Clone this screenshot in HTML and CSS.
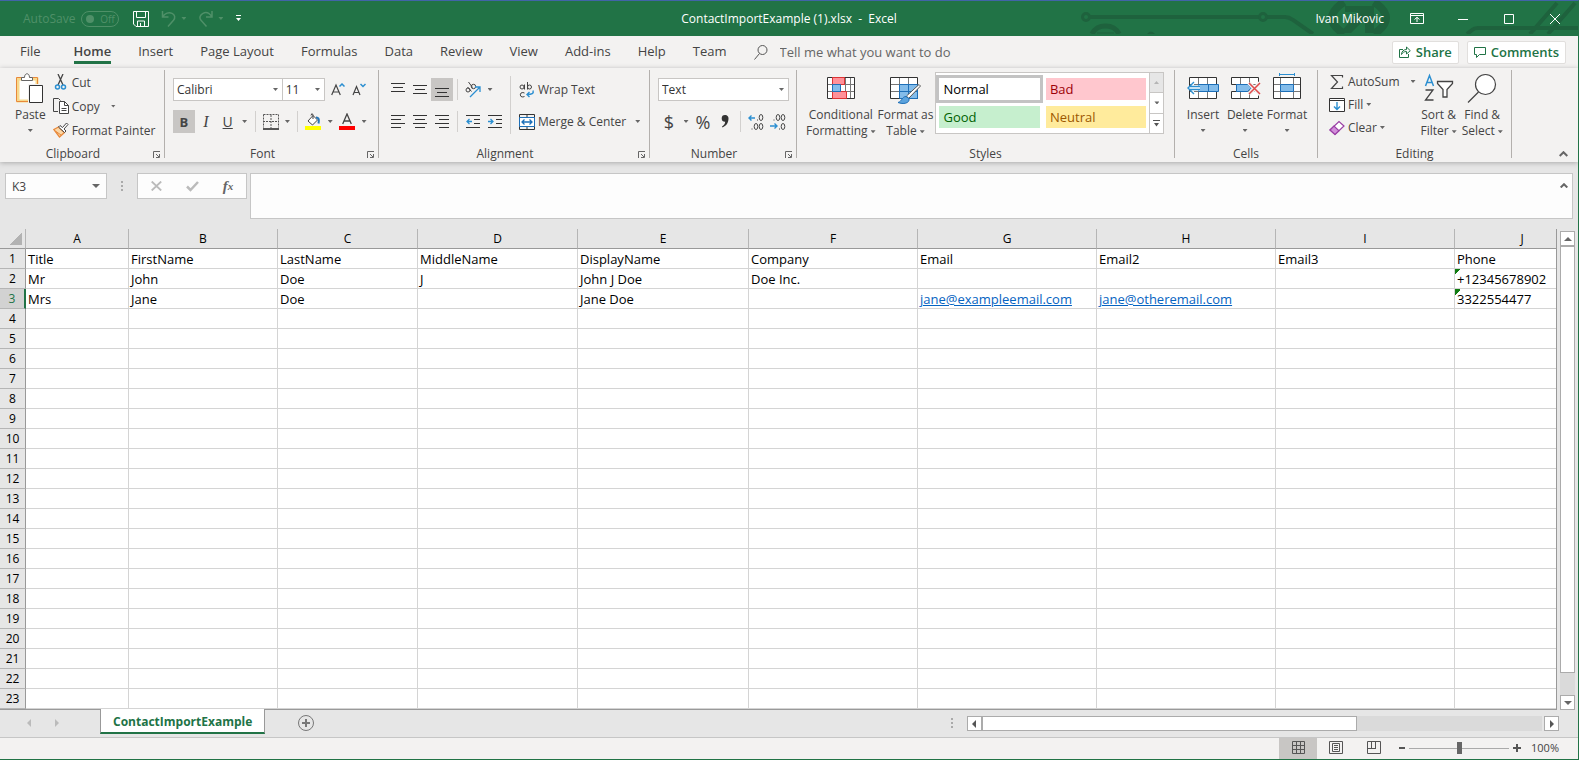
FILE: index.html
```html
<!DOCTYPE html>
<html lang="en">
<head>
    <meta charset="UTF-8">
    <meta name="viewport" content="width=device-width, initial-scale=1.0">
    <title>ContactImportExample (1).xlsx - Excel</title>
    <link rel="stylesheet" href="styles.css">
</head>
<body>
    <header class="titlebar">
        <svg class="circuit" width="500" height="33" viewBox="0 0 500 33" fill="none" stroke="#1e623d" stroke-width="4">
            <circle cx="8" cy="16" r="3.5" stroke-width="3"/>
            <path d="M12 16h169M189 16h18q4 0 8 3l20 14"/>
            <circle cx="185" cy="16" r="3.5" stroke-width="3"/>
            <path d="M14 33a15 14 0 0 1 27 0" stroke-width="5"/>
            <path d="M19 32h17" stroke-width="1"/>
            <path d="M69 33q4-5 8 0z" fill="#1e623d" stroke="none"/>
            <path d="M266 1q-24 16 0 32M296 1q24 16 0 32" stroke-width="8"/>
            <path d="M267 5h29v27h-9V18l-14 14h-11l18-21h-13z" fill="#1e623d" stroke="none"/>
            <path d="M389 33l5-4q2-2 6-2h100M452 33l27-31M470 33l27-31"/>
        </svg>
        <div class="quick">
            <label class="autosave">AutoSave
                <button class="toggle" type="button"><span class="knob"></span>Off</button>
            </label>
            <button class="qbtn save" type="button" aria-label="Save">
                <svg width="16" height="16" viewBox="0 0 16 16" fill="none" stroke="#fff"><path d="M.5.5h15v15H3L.5 13zM3.5 1v5.5h9V1M4.5 15v-5h7v5M7.5 12v3"/></svg>
            </button>
            <button class="qbtn" type="button" aria-label="Undo">
                <svg width="16" height="16" viewBox="0 0 16 16" fill="none" stroke="#4f9068" stroke-width="1.5"><path d="M1.5 0v6h6M1.5 6C4 2 8 .8 11 2.3s3.5 4.5 1.5 7L7 15.5"/></svg>
                <span class="caret"></span>
            </button>
            <button class="qbtn" type="button" aria-label="Redo">
                <svg width="16" height="16" viewBox="0 0 16 16" fill="none" stroke="#4f9068" stroke-width="1.5"><path d="M14 0v6H8M14 6C11.5 2 8 .8 5 2.3S1 7 3 9.3l5.5 6.2"/></svg>
                <span class="caret"></span>
            </button>
            <button class="qbtn" type="button" aria-label="Customize">
                <svg width="7" height="7" viewBox="0 0 7 7" fill="#fff"><path d="M1 0h5v1H1zM1 3h5L3.5 6z"/></svg>
            </button>
        </div>
        <h1 class="doc-title">ContactImportExample (1).xlsx&nbsp; -&nbsp; Excel</h1>
        <div class="window-controls">
            <span class="user">Ivan Mikovic</span>
            <button type="button" aria-label="Ribbon display"><svg width="14" height="11" viewBox="0 0 14 11" fill="none" stroke="#fff"><path d="M.5.5h13v10H.5zM0 2.5h14M7 9V4.500M4.500 6.500L7 4.300l2.500 2.200"/></svg></button>
            <button type="button" aria-label="Minimize"><svg width="10" height="10" viewBox="0 0 10 10" stroke="#fff"><path d="M0 5.500h10"/></svg></button>
            <button type="button" aria-label="Maximize"><svg width="10" height="10" viewBox="0 0 10 10" fill="none" stroke="#fff"><path d="M.5.5h9v9H.5z"/></svg></button>
            <button type="button" aria-label="Close"><svg width="10" height="10" viewBox="0 0 10 10" stroke="#fff"><path d="M0 0l10 10M10 0L0 10"/></svg></button>
        </div>
    </header>

    <nav class="tabs">
        <a href="#" class="file">File</a>
        <a href="#" class="active">Home</a>
        <a href="#">Insert</a>
        <a href="#">Page Layout</a>
        <a href="#">Formulas</a>
        <a href="#">Data</a>
        <a href="#">Review</a>
        <a href="#">View</a>
        <a href="#">Add-ins</a>
        <a href="#">Help</a>
        <a href="#">Team</a>
        <label class="tell-me">
            <svg width="14" height="15" viewBox="0 0 14 15" fill="none" stroke="#555"><circle cx="8.500" cy="5" r="4.500"/><path d="M5.500 8.500l-5 6"/></svg>
            <input type="text" value="Tell me what you want to do">
        </label>
        <div class="tab-actions">
            <button type="button"><svg width="12" height="12" viewBox="0 0 12 12" fill="none" stroke="#217346"><path d="M4 3.500H.5v8h9V8M2.500 8.500c0-3 2-5 5-5V1l3.800 3.700L7.500 8V5.500c-2.500 0-4 1-5 3z"/></svg>Share</button>
            <button type="button"><svg width="12" height="11" viewBox="0 0 12 11" fill="none" stroke="#217346"><path d="M.5.5h11v7h-6l-3 3v-3h-2z"/></svg>Comments</button>
        </div>
    </nav>

    <section class="ribbon">
        <div class="group clipboard">
            <div class="tools">
                <button class="big" type="button">
                    <svg width="28" height="32" viewBox="0 0 28 32" fill="none"><path d="M2 6h19v22H2z" fill="#fff" stroke="#f7d98c" stroke-width="3"/><path d="M.5 4.500h21v24H.5z" stroke="#e8883a"/><path d="M5.500 7.500v-3h3c0-5 5-5 5 0h3v3z" fill="#fff" stroke="#666"/><path d="M12 11h16v20H12z" fill="#f3f2f1"/><path d="M13.500 12.500h13v17h-13z" fill="#fff" stroke="#333"/></svg>
                    <span>Paste</span>
                    <span class="caret"></span>
                </button>
                <div class="stack">
                    <button type="button"><svg width="16" height="16" viewBox="0 0 16 16" fill="none"><path d="M5 0l5 11M10 0L5 11" stroke="#444" stroke-width="1.300"/><circle cx="4.500" cy="13" r="2" stroke="#2b8fd1" stroke-width="1.500"/><circle cx="10.500" cy="13" r="2" stroke="#2b8fd1" stroke-width="1.500"/></svg>Cut</button>
                    <button type="button"><svg width="16" height="16" viewBox="0 0 16 16" fill="none" stroke="#444"><path d="M5 13.500H.5V.5h5l2 2"/><path d="M6.500 3.500h5l4 4v8h-9z" fill="#fff"/><path d="M11.500 3.500v4h4M8.500 10.500h5M8.500 12.500h5"/></svg>Copy<span class="caret"></span></button>
                    <button type="button"><svg width="16" height="16" viewBox="0 0 16 16" fill="none"><path d="M.8 7.500L5.500 5l6 5.500-5 4.500z" fill="#fbd7a6" stroke="#e8883a" stroke-width="1.300"/><path d="M3 9.500l5 3.500" stroke="#e8883a"/><path d="M5.500 5L7 3.500l2.500 2L13.500 1 15 2.500 11 7l2 2-1.500 1.500z" fill="#fff" stroke="#444"/></svg>Format Painter</button>
                </div>
            </div>
            <div class="group-name">Clipboard<svg class="launch" width="8" height="8" viewBox="0 0 8 8"><path d="M.5 7V.5H7M3 3l3 3M6.500 3v3.500H3" fill="none" stroke="#666"/></svg></div>
        </div>

        <div class="group font">
            <div class="tools rows">
                <div class="row">
                    <select class="combo face" aria-label="Font"><option>Calibri</option></select>
                    <select class="combo size" aria-label="Font size"><option>11</option></select>
                    <button class="ic grow" type="button" aria-label="Increase font size"><svg width="14" height="14" viewBox="0 0 14 14" fill="none"><path d="M.7 12L5 2l4.300 10M2 9h6" stroke="#444" stroke-width="1.200"/><path d="M8.500 3.500L11 1l2.500 2.500" stroke="#2b8fd1" stroke-width="1.500"/></svg></button>
                    <button class="ic" type="button" aria-label="Decrease font size"><svg width="14" height="14" viewBox="0 0 14 14" fill="none"><path d="M1 12l3.500-8.500L8 12M2 9.500h5" stroke="#444" stroke-width="1.200"/><path d="M8.500 1L11 3.500 13.500 1" stroke="#2b8fd1" stroke-width="1.500"/></svg></button>
                </div>
                <div class="row">
                    <button class="ic on" type="button"><b>B</b></button>
                    <button class="ic serif" type="button"><i>I</i></button>
                    <button class="ic" type="button"><u>U</u></button>
                    <button class="drop" type="button" aria-label="Underline options"><span class="caret"></span></button>
                    <span class="sep"></span>
                    <button class="ic" type="button" aria-label="Borders"><svg width="16" height="16" viewBox="0 0 16 16" fill="none" stroke="#555"><path d="M.5.5h15v13M.5.5v13M8 1v13M0 7.500h16" stroke-dasharray="2 1"/><path d="M0 15h16" stroke="#222" stroke-width="1.500"/></svg></button>
                    <button class="drop" type="button" aria-label="Border options"><span class="caret"></span></button>
                    <span class="sep"></span>
                    <button class="ic" type="button" aria-label="Fill color"><svg width="16" height="17" viewBox="0 0 16 17" fill="none"><path d="M8 2.500l4.500 4.500L7.500 12 3 8zM8 6V1.500q-1.500-2-2 1" fill="#fff" stroke="#444"/><path d="M11 4.500c3.500 0 3 3 2.500 6" stroke="#2576b8" stroke-width="2"/><path d="M0 13h16v4H0z" fill="#ff0"/></svg></button>
                    <button class="drop" type="button" aria-label="Fill options"><span class="caret"></span></button>
                    <button class="ic" type="button" aria-label="Font color"><svg width="16" height="17" viewBox="0 0 16 17" fill="none"><path d="M3.700 11L8 1l4.300 10M5 8h6" stroke="#444" stroke-width="1.300"/><path d="M0 13h16v4H0z" fill="#f00"/></svg></button>
                    <button class="drop" type="button" aria-label="Font color options"><span class="caret"></span></button>
                </div>
            </div>
            <div class="group-name">Font<svg class="launch" width="8" height="8" viewBox="0 0 8 8"><path d="M.5 7V.5H7M3 3l3 3M6.500 3v3.500H3" fill="none" stroke="#666"/></svg></div>
        </div>

        <div class="group alignment">
            <div class="tools">
                <div class="rows">
                    <div class="row">
                        <button class="ic" type="button" aria-label="Top align"><svg width="14" height="14" viewBox="0 0 14 14" stroke="#333"><path d="M0 .5h14M2 4.500h10M0 8.500h14"/></svg></button>
                        <button class="ic" type="button" aria-label="Middle align"><svg width="14" height="14" viewBox="0 0 14 14" stroke="#333"><path d="M0 2.500h14M2 6.500h10M0 10.500h14"/></svg></button>
                        <button class="ic on" type="button" aria-label="Bottom align"><svg width="14" height="14" viewBox="0 0 14 14" stroke="#333"><path d="M0 5.500h14M2 9.500h10M0 13.500h14"/></svg></button>
                        <span class="sep"></span>
                        <button class="ic" type="button" aria-label="Orientation"><svg width="18" height="16" viewBox="0 0 18 16" fill="none"><g stroke="#444"><circle cx="4" cy="8" r="2"/><path d="M3.500 5l4 4.500"/><circle cx="9.500" cy="4.500" r="2.200"/><path d="M4.500 0l4 5.500"/></g><path d="M6 15l9.500-9.500M11 5h5v5" stroke="#2b8fd1" stroke-width="1.300"/></svg></button>
                        <button class="drop" type="button" aria-label="Orientation options"><span class="caret"></span></button>
                    </div>
                    <div class="row">
                        <button class="ic" type="button" aria-label="Align left"><svg width="14" height="14" viewBox="0 0 14 14" stroke="#333"><path d="M0 .5h14M0 4.500h10M0 8.500h14M0 12.500h10"/></svg></button>
                        <button class="ic" type="button" aria-label="Center"><svg width="14" height="14" viewBox="0 0 14 14" stroke="#333"><path d="M0 .5h14M2 4.500h10M0 8.500h14M2 12.500h10"/></svg></button>
                        <button class="ic" type="button" aria-label="Align right"><svg width="14" height="14" viewBox="0 0 14 14" stroke="#333"><path d="M0 .5h14M4 4.500h10M0 8.500h14M4 12.500h10"/></svg></button>
                        <span class="sep"></span>
                        <button class="ic" type="button" aria-label="Decrease indent"><svg width="14" height="14" viewBox="0 0 14 14" fill="none" stroke="#333"><path d="M0 .5h14M8 4.500h6M8 8.500h6M0 12.500h14"/><path d="M6 6.500H1M3.500 4L1 6.500 3.500 9" stroke="#2b8fd1" stroke-width="1.300"/></svg></button>
                        <button class="ic" type="button" aria-label="Increase indent"><svg width="14" height="14" viewBox="0 0 14 14" fill="none" stroke="#333"><path d="M0 .5h14M8 4.500h6M8 8.500h6M0 12.500h14"/><path d="M0 6.500h5M2.500 4L5 6.500 2.500 9" stroke="#2b8fd1" stroke-width="1.300"/></svg></button>
                    </div>
                </div>
                <span class="sep tall"></span>
                <div class="rows">
                    <button class="row label" type="button"><svg width="16" height="16" viewBox="0 0 16 16" fill="none"><g stroke="#444"><circle cx="3" cy="5" r="2"/><path d="M5.500 2.500v5M8.500 0v7.500M5.500 11q-1.500-1-3.500 0-1.500 2 0 3.500 2 1 3.500 0"/><circle cx="10.500" cy="5" r="2"/></g><path d="M14 8.500c1 3-1 4-6 4M10.500 10L8 12.500l2.500 2.500" stroke="#2b8fd1" stroke-width="1.400"/></svg>Wrap Text</button>
                    <button class="row label" type="button"><svg width="16" height="16" viewBox="0 0 16 16" fill="none"><path d="M.5.5h15v15H.5zM0 3.500h16M0 12.500h16M8 0v4M8 12v4" stroke="#333"/><path d="M.5 3.500h15v9H.5z" fill="#fff" stroke="#1d6fb8"/><path d="M3 8h10M5.500 5.500L3 8l2.500 2.500M10.500 5.500L13 8l-2.500 2.500" stroke="#1d6fb8" stroke-width="1.300"/></svg>Merge &amp; Center<span class="caret"></span></button>
                </div>
            </div>
            <div class="group-name">Alignment<svg class="launch" width="8" height="8" viewBox="0 0 8 8"><path d="M.5 7V.5H7M3 3l3 3M6.500 3v3.500H3" fill="none" stroke="#666"/></svg></div>
        </div>

        <div class="group number">
            <div class="tools rows">
                <div class="row"><select class="combo format" aria-label="Number format"><option>Text</option></select></div>
                <div class="row">
                    <button class="ic glyph" type="button">$</button>
                    <button class="drop" type="button" aria-label="Currency options"><span class="caret"></span></button>
                    <button class="ic glyph" type="button">%</button>
                    <button class="ic" type="button" aria-label="Comma style"><svg width="8" height="13" viewBox="0 0 8 13" fill="#333"><path d="M4 0a3.300 3.300 0 0 1 3.500 3.500C7.500 8 5 11 1.500 12.500l-.5-1c2-1.200 3-2.700 3.200-4.700A3.300 3.300 0 1 1 4 0z"/></svg></button>
                    <span class="sep"></span>
                    <button class="ic" type="button" aria-label="Increase decimal"><svg width="16" height="16" viewBox="0 0 16 16" fill="none" stroke="#444"><path d="M7 4H1M3.500 1.500L1 4l2.500 2.500" stroke="#2b8fd1" stroke-width="1.400"/><ellipse cx="13" cy="3.500" rx="1.800" ry="3"/><ellipse cx="8" cy="12.500" rx="1.800" ry="3"/><ellipse cx="13" cy="12.500" rx="1.800" ry="3"/><path d="M9 6h1M3.500 15h1"/></svg></button>
                    <button class="ic" type="button" aria-label="Decrease decimal"><svg width="16" height="16" viewBox="0 0 16 16" fill="none" stroke="#444"><path d="M0 12h7M4.500 9.500L7 12l-2.500 2.500" stroke="#2b8fd1" stroke-width="1.400"/><ellipse cx="8" cy="3.500" rx="1.800" ry="3"/><ellipse cx="13" cy="3.500" rx="1.800" ry="3"/><ellipse cx="13" cy="12.500" rx="1.800" ry="3"/><path d="M3.500 6h1M9 15h1"/></svg></button>
                </div>
            </div>
            <div class="group-name">Number<svg class="launch" width="8" height="8" viewBox="0 0 8 8"><path d="M.5 7V.5H7M3 3l3 3M6.500 3v3.500H3" fill="none" stroke="#666"/></svg></div>
        </div>

        <div class="group styles">
            <div class="tools">
                <button class="big" type="button">
                    <svg width="28" height="32" viewBox="0 0 28 32" fill="none"><path d="M.5 4.500h27v21H.5z" fill="#fff"/><path d="M5.500 5v20M18.500 5v20M23.500 5v20M0 11.500h28M0 18.500h28" stroke="#777"/><path d="M.5 4.500h27v21H.5z" stroke="#333"/><path d="M5.500 4.500h12v7h-12zM5.500 18.500h14v7h-14z" fill="#ff9199" stroke="#d33"/><path d="M5.500 11.500h8v7h-8z" fill="#83bcea" stroke="#1d6fb8"/></svg>
                    <span>Conditional<br>Formatting<span class="caret"></span></span>
                </button>
                <button class="big" type="button">
                    <svg width="32" height="32" viewBox="0 0 32 32" fill="none"><path d="M.5 4.500h27v21H.5z" fill="#fff"/><path d="M9.500 11.500h18v14h-18z" fill="#83bcea"/><path d="M9.500 5v20M18.500 5v20M0 11.500h28M0 18.500h28" stroke="#777"/><path d="M.5 4.500h27v21H.5z" stroke="#333"/><path d="M9.500 11.500h18v14h-18zM18.500 12v13M10 18.500h17" stroke="#1d6fb8"/><path d="M29 11.500L16.500 23l2 2.500L30.500 13z" fill="#fff" stroke="#555"/><path d="M16 23.500c-4 0-4 5-8 6 5 2 12 1 11-4z" fill="#5ba3dd" stroke="#1d6fb8"/></svg>
                    <span>Format as<br>Table<span class="caret"></span></span>
                </button>
                <div class="gallery">
                    <div class="swatches">
                        <button class="normal" type="button">Normal</button>
                        <button class="bad" type="button">Bad</button>
                        <button class="good" type="button">Good</button>
                        <button class="neutral" type="button">Neutral</button>
                    </div>
                    <div class="gallery-nav">
                        <button class="off" type="button" aria-label="Row up"><svg width="5" height="3" viewBox="0 0 5 3" fill="#b5b5b5"><path d="M0 3h5L2.500 0z"/></svg></button>
                        <button type="button" aria-label="Row down"><span class="caret"></span></button>
                        <button type="button" aria-label="More styles"><svg width="7" height="7" viewBox="0 0 7 7" fill="#555"><path d="M0 0h7v1H0zM1 3h5L3.500 6.500z"/></svg></button>
                    </div>
                </div>
            </div>
            <div class="group-name">Styles</div>
        </div>

        <div class="group cells">
            <div class="tools">
                <button class="big" type="button">
                    <svg width="32" height="32" viewBox="0 0 32 32" fill="none"><path d="M2.500 4.500h27v21h-27z" fill="#fff"/><path d="M11.500 5v20M20.500 5v20M3 11.500h27M3 18.500h27" stroke="#777"/><path d="M2.500 4.500h27v21h-27z" stroke="#333"/><path d="M11.500 11.500h20v7h-20zM21.500 12v6" fill="#83bcea" stroke="#1d6fb8"/><path d="M1 15l6-6v3.500h6v5H7V21z" fill="#fff"/><path d="M7 9l-6 6 6 6M2 13.500h11M2 16.500h11" stroke="#2b8fd1" stroke-width="1.400"/></svg>
                    <span>Insert</span>
                    <span class="caret"></span>
                </button>
                <button class="big" type="button">
                    <svg width="32" height="32" viewBox="0 0 32 32" fill="none"><path d="M2.500 4.500h27v21h-27z" fill="#fff"/><path d="M11.500 5v20M20.500 5v20M3 11.500h27M3 18.500h27" stroke="#777"/><path d="M2.500 11.500v-7h27v7M2.500 11.500h5M2.500 18.500v7h27v-3M2.500 18.500h5" stroke="#333"/><path d="M1 12h6v6H1z" fill="#f3f2f1"/><path d="M7.500 11.500h11l4 3.500-4 3.500h-11z" fill="#83bcea" stroke="#1d6fb8"/><path d="M20 10l11 11M31 10L20 21" stroke="#f3f2f1" stroke-width="4"/><path d="M20 10l11 11M31 10L20 21" stroke="#e04a4a" stroke-width="1.500"/></svg>
                    <span>Delete</span>
                    <span class="caret"></span>
                </button>
                <button class="big" type="button">
                    <svg width="32" height="32" viewBox="0 0 32 32" fill="none"><path d="M2.500 4.500h27v21h-27z" fill="#fff"/><path d="M9.500 5v20M22.500 5v20M3 11.500h27M3 18.500h27" stroke="#777"/><path d="M2.500 4.500h27v21h-27z" stroke="#333"/><path d="M9.500 11.500h13v7h-13z" fill="#83bcea" stroke="#1d6fb8"/><path d="M8.500 0v3M23.500 0v3M9 1.500h14" stroke="#2b8fd1"/></svg>
                    <span>Format</span>
                    <span class="caret"></span>
                </button>
            </div>
            <div class="group-name">Cells</div>
        </div>

        <div class="group editing">
            <div class="tools">
                <div class="stack">
                    <button type="button"><svg width="16" height="16" viewBox="0 0 16 16" fill="none" stroke="#444" stroke-width="1.200"><path d="M13.500 3.500v-2h-11L8.500 8l-6 6.500h11v-2"/></svg>AutoSum<span class="caret"></span></button>
                    <button class="tight" type="button"><svg width="16" height="16" viewBox="0 0 16 16" fill="none"><path d="M.5 1.500h15v13H.5z" fill="#fff" stroke="#333"/><path d="M0 3.500h16" stroke="#333"/><path d="M8 5v7M5 9.500l3 3 3-3" stroke="#2b8fd1" stroke-width="1.400"/></svg>Fill<span class="caret"></span></button>
                    <button class="tight" type="button"><svg width="16" height="16" viewBox="0 0 16 16" fill="none" stroke="#9a3fa5" stroke-width="1.200"><path d="M1 10l9-8.500 5 4.500-9 8.500z" fill="#fff"/><path d="M1 10l4-4 5 4.800-4 3.700z" fill="#d28fda"/></svg>Clear<span class="caret"></span></button>
                </div>
                <button class="big" type="button">
                    <svg width="30" height="32" viewBox="0 0 30 32" fill="none" stroke-width="1.300"><path d="M1.500 13l4-10.500L9.500 13M3 9.500h5" stroke="#2b8fd1" stroke-width="1.500"/><path d="M1.500 17H9L1.500 27h8" stroke="#444"/><path d="M13.500 8.500h15v2L23 16.500v7.500h-4v-7.500l-5.500-6z" fill="#fff" stroke="#444"/></svg>
                    <span>Sort &amp;<br>Filter<span class="caret"></span></span>
                </button>
                <button class="big" type="button">
                    <svg width="30" height="32" viewBox="0 0 30 32" fill="none" stroke="#444" stroke-width="1.200"><circle cx="18.500" cy="11.500" r="10" fill="#fff"/><path d="M11.500 19L1 29.500"/></svg>
                    <span>Find &amp;<br>Select<span class="caret"></span></span>
                </button>
            </div>
            <div class="group-name">Editing</div>
        </div>
        <button class="collapse" type="button" aria-label="Collapse ribbon"><svg width="9" height="6" viewBox="0 0 9 6" fill="none" stroke="#666" stroke-width="2"><path d="M.7 5l3.800-3.800L8.300 5"/></svg></button>
    </section>

    <section class="formula-bar">
        <div class="name-box">
            <input type="text" value="K3" aria-label="Name box">
            <svg width="8" height="4" viewBox="0 0 8 4" fill="#666"><path d="M0 0h8L4 4z"/></svg>
        </div>
        <span class="dots"></span>
        <div class="entry">
            <button type="button" aria-label="Cancel"><svg width="11" height="10" viewBox="0 0 11 10" stroke="#bbb" stroke-width="1.800"><path d="M.7.5l9.500 9M10.200.5L.7 9.500"/></svg></button>
            <button type="button" aria-label="Enter"><svg width="13" height="11" viewBox="0 0 13 11" fill="none" stroke="#bbb" stroke-width="2.500"><path d="M1 5.500L4.500 9 12 1"/></svg></button>
            <button class="fx" type="button">f<sub>x</sub></button>
        </div>
        <div class="formula">
            <textarea aria-label="Formula"></textarea>
            <svg width="8" height="5" viewBox="0 0 8 5" fill="none" stroke="#666" stroke-width="2"><path d="M.7 4.500L4 1.200l3.300 3.300"/></svg>
        </div>
    </section>

    <main class="sheet">
        <div class="grid">
            <table>
                <colgroup>
                    <col class="c-head"><col class="c-a"><col class="c-b"><col class="c-c"><col class="c-d"><col class="c-e"><col class="c-f"><col class="c-g"><col class="c-g"><col class="c-g"><col class="c-j">
                </colgroup>
                <thead>
                    <tr><th class="corner"></th><th>A</th><th>B</th><th>C</th><th>D</th><th>E</th><th>F</th><th>G</th><th>H</th><th>I</th><th>J</th></tr>
                </thead>
                <tbody>
                    <tr><th>1</th><td>Title</td><td>FirstName</td><td>LastName</td><td>MiddleName</td><td>DisplayName</td><td>Company</td><td>Email</td><td>Email2</td><td>Email3</td><td>Phone</td></tr>
                    <tr><th>2</th><td>Mr</td><td>John</td><td>Doe</td><td>J</td><td>John J Doe</td><td>Doe Inc.</td><td></td><td></td><td></td><td class="flag">+12345678902</td></tr>
                    <tr class="current"><th>3</th><td>Mrs</td><td>Jane</td><td>Doe</td><td></td><td>Jane Doe</td><td></td><td><a href="mailto:jane@exampleemail.com">jane@exampleemail.com</a></td><td><a href="mailto:jane@otheremail.com">jane@otheremail.com</a></td><td></td><td class="flag">3322554477</td></tr>
                    <tr><th>4</th><td></td><td></td><td></td><td></td><td></td><td></td><td></td><td></td><td></td><td></td></tr>
                    <tr><th>5</th><td></td><td></td><td></td><td></td><td></td><td></td><td></td><td></td><td></td><td></td></tr>
                    <tr><th>6</th><td></td><td></td><td></td><td></td><td></td><td></td><td></td><td></td><td></td><td></td></tr>
                    <tr><th>7</th><td></td><td></td><td></td><td></td><td></td><td></td><td></td><td></td><td></td><td></td></tr>
                    <tr><th>8</th><td></td><td></td><td></td><td></td><td></td><td></td><td></td><td></td><td></td><td></td></tr>
                    <tr><th>9</th><td></td><td></td><td></td><td></td><td></td><td></td><td></td><td></td><td></td><td></td></tr>
                    <tr><th>10</th><td></td><td></td><td></td><td></td><td></td><td></td><td></td><td></td><td></td><td></td></tr>
                    <tr><th>11</th><td></td><td></td><td></td><td></td><td></td><td></td><td></td><td></td><td></td><td></td></tr>
                    <tr><th>12</th><td></td><td></td><td></td><td></td><td></td><td></td><td></td><td></td><td></td><td></td></tr>
                    <tr><th>13</th><td></td><td></td><td></td><td></td><td></td><td></td><td></td><td></td><td></td><td></td></tr>
                    <tr><th>14</th><td></td><td></td><td></td><td></td><td></td><td></td><td></td><td></td><td></td><td></td></tr>
                    <tr><th>15</th><td></td><td></td><td></td><td></td><td></td><td></td><td></td><td></td><td></td><td></td></tr>
                    <tr><th>16</th><td></td><td></td><td></td><td></td><td></td><td></td><td></td><td></td><td></td><td></td></tr>
                    <tr><th>17</th><td></td><td></td><td></td><td></td><td></td><td></td><td></td><td></td><td></td><td></td></tr>
                    <tr><th>18</th><td></td><td></td><td></td><td></td><td></td><td></td><td></td><td></td><td></td><td></td></tr>
                    <tr><th>19</th><td></td><td></td><td></td><td></td><td></td><td></td><td></td><td></td><td></td><td></td></tr>
                    <tr><th>20</th><td></td><td></td><td></td><td></td><td></td><td></td><td></td><td></td><td></td><td></td></tr>
                    <tr><th>21</th><td></td><td></td><td></td><td></td><td></td><td></td><td></td><td></td><td></td><td></td></tr>
                    <tr><th>22</th><td></td><td></td><td></td><td></td><td></td><td></td><td></td><td></td><td></td><td></td></tr>
                    <tr><th>23</th><td></td><td></td><td></td><td></td><td></td><td></td><td></td><td></td><td></td><td></td></tr>
                </tbody>
            </table>
        </div>
        <div class="vscroll">
            <button type="button" aria-label="Scroll up"><svg width="8" height="4" viewBox="0 0 8 4" fill="#666"><path d="M0 4h8L4 0z"/></svg></button>
            <div class="track"><div class="thumb"></div></div>
            <button type="button" aria-label="Scroll down"><svg width="8" height="4" viewBox="0 0 8 4" fill="#666"><path d="M0 0h8L4 4z"/></svg></button>
        </div>
    </main>

    <div class="sheet-tabs">
        <div class="tab-nav">
            <button type="button" aria-label="Previous sheet"><svg width="4" height="8" viewBox="0 0 4 8" fill="#bbb"><path d="M4 0v8L0 4z"/></svg></button>
            <button type="button" aria-label="Next sheet"><svg width="4" height="8" viewBox="0 0 4 8" fill="#bbb"><path d="M0 0v8l4-4z"/></svg></button>
        </div>
        <button class="sheet-tab" type="button">ContactImportExample</button>
        <button class="add-sheet" type="button" aria-label="New sheet"><svg width="16" height="16" viewBox="0 0 16 16" fill="none" stroke="#777"><circle cx="8" cy="8" r="7.500"/><path d="M8 4v8M4 8h8" stroke-width="2"/></svg></button>
        <span class="dots"></span>
        <div class="hscroll">
            <button type="button" aria-label="Scroll left"><svg width="4" height="8" viewBox="0 0 4 8" fill="#555"><path d="M4 0v8L0 4z"/></svg></button>
            <div class="track"><div class="thumb"></div></div>
            <button type="button" aria-label="Scroll right"><svg width="4" height="8" viewBox="0 0 4 8" fill="#555"><path d="M0 0v8l4-4z"/></svg></button>
        </div>
    </div>

    <footer class="statusbar">
        <button class="view on" type="button" aria-label="Normal view"><svg width="13" height="13" viewBox="0 0 13 13" fill="none" stroke="#555"><path d="M.5.5h12v12H.5zM4.500 0v13M8.500 0v13M0 4.500h13M0 8.500h13"/></svg></button>
        <button class="view" type="button" aria-label="Page layout view"><svg width="14" height="13" viewBox="0 0 14 13" fill="none" stroke="#555"><path d="M.5.5h13v12H.5zM3.500 2.500h7v8h-7zM5 4.500h4M5 6.500h4M5 8.500h4"/></svg></button>
        <button class="view" type="button" aria-label="Page break view"><svg width="14" height="13" viewBox="0 0 14 13" fill="none" stroke="#555"><path d="M.5.5h13v12H.5zM4.500 0v8M0 7.500h9M8.500 0v8"/></svg></button>
        <div class="zoom">
            <button type="button" aria-label="Zoom out"><svg width="6" height="8" viewBox="0 0 6 8" fill="#555"><path d="M0 3h6v2H0z"/></svg></button>
            <input type="range" min="0" max="100" value="50" aria-label="Zoom">
            <button type="button" aria-label="Zoom in"><svg width="8" height="8" viewBox="0 0 8 8" fill="#555"><path d="M0 3h3V0h2v3h3v2H5v3H3V5H0z"/></svg></button>
            <span class="percent">100%</span>
        </div>
    </footer>
</body>
</html>
```
FILE: styles.css
```css
* {
    box-sizing: border-box;
}
body {
    margin: 0;
    min-height: 100vh;
    display: flex;
    flex-direction: column;
    background-color: #e6e6e6;
    border-top: 1px solid #4164a8;
    border-right: 1px solid #217346;
    border-bottom: 1px solid #217346;
    font-family: "Open Sans", "Noto Sans", sans-serif;
    font-size: 12px;
    color: #444;
}
button, input, select, textarea {
    font: inherit;
    color: inherit;
    background: none;
    border: none;
    margin: 0;
    padding: 0;
    outline: none;
}
button {
    display: flex;
    align-items: center;
    justify-content: center;
    white-space: nowrap;
}
svg {
    flex: none;
    display: block;
}
.caret {
    flex: none;
    width: 5px;
    height: 3px;
    background-color: #666;
    clip-path: polygon(0 0, 100% 0, 50% 100%);
}

/* title bar */
.titlebar {
    position: relative;
    display: grid;
    grid-template-columns: 1fr auto 1fr;
    align-items: center;
    height: 35px;
    background-color: #217346;
    color: #fff;
}
.circuit {
    position: absolute;
    right: 0;
    top: 0;
}
.quick {
    display: flex;
    align-items: center;
    padding-left: 23px;
}
.quick .caret {
    background-color: #4f9068;
}
.autosave {
    display: flex;
    align-items: center;
    gap: 6px;
    color: #4f9068;
}
.toggle {
    width: 38px;
    height: 16px;
    border: 1px solid #4f9068;
    border-radius: 8px;
    font-size: 10px;
    gap: 6px;
}
.knob {
    width: 8px;
    height: 8px;
    border-radius: 50%;
    background-color: #4f9068;
}
.qbtn {
    gap: 4px;
    margin-right: 12px;
}
.save {
    margin-left: 14px;
}
.doc-title {
    margin: 0;
    font-size: 12px;
    font-weight: 400;
}
.window-controls {
    position: relative;
    display: flex;
    justify-content: flex-end;
    align-items: center;
}
.window-controls button {
    width: 46px;
    height: 34px;
}
.user {
    margin-right: 10px;
}

/* ribbon tabs */
.tabs {
    display: flex;
    align-items: center;
    gap: 27px;
    height: 32px;
    padding: 0 12px 0 20px;
    background-color: #f3f2f1;
    font-size: 13px;
}
.tabs a {
    color: #444;
    text-decoration: none;
    line-height: 20px;
    border-top: 1px solid transparent;
    border-bottom: 3px solid transparent;
    white-space: nowrap;
}
.tabs .file {
    margin-right: 6px;
}
.tabs .active {
    font-weight: 600;
    border-bottom-color: #217346;
}
.tell-me {
    display: flex;
    align-items: center;
    gap: 12px;
    flex: 1;
}
.tell-me input {
    width: 200px;
    color: #666;
}
.tab-actions {
    display: flex;
    gap: 8px;
}
.tab-actions button {
    height: 23px;
    padding: 0 6px;
    gap: 5px;
    background-color: #fff;
    border: 1px solid #e1dfdd;
    border-radius: 2px;
    color: #217346;
    font-weight: 600;
}

/* ribbon */
.ribbon {
    display: flex;
    height: 94px;
    padding: 2px 0 4px;
    background-color: #f3f2f1;
    box-shadow: 0 1px 5px #aaa;
}
.group {
    flex: none;
    display: flex;
    flex-direction: column;
    border-right: 1px solid #b3b0ad;
}
.clipboard { width: 165px; }
.font { width: 214px; }
.alignment { width: 271px; }
.number { width: 147px; }
.styles { width: 378px; }
.cells { width: 143px; }
.editing { width: 194px; }
.tools {
    flex: 1;
    display: flex;
    padding: 0 8px;
}
.group-name {
    position: relative;
    height: 16px;
    line-height: 24px;
    text-align: center;
    padding-right: 18px;
}
.styles .group-name, .cells .group-name, .editing .group-name {
    padding-right: 0;
}
.launch {
    position: absolute;
    right: 3px;
    top: 9px;
}
.big {
    flex-direction: column;
    justify-content: flex-start;
    line-height: 16px;
    padding-top: 3px;
}
.big span {
    margin-top: 2px;
}
.big > .caret {
    margin-top: 6px;
}
.big span .caret {
    display: inline-block;
    vertical-align: middle;
    margin: 0 0 0 3px;
}
.stack {
    display: flex;
    flex-direction: column;
}
.stack button {
    height: 24px;
    gap: 3px;
    justify-content: flex-start;
}
.stack .caret {
    margin-left: 8px;
}
.stack .tight .caret {
    margin-left: 0;
}
.clipboard .tools {
    padding: 0 0 0 15px;
    gap: 7px;
}
.rows {
    display: flex;
    flex-direction: column;
    gap: 9px;
    padding-top: 8px;
}
.row {
    display: flex;
    align-items: center;
    height: 23px;
}
.label {
    gap: 3px;
    justify-content: flex-start;
}
.label .caret {
    margin-left: 6px;
}
.ic {
    width: 22px;
    height: 23px;
}
.grow {
    margin-left: 2px;
}
.on {
    background-color: #c8c6c4;
}
.ic b {
    font-size: 13px;
}
.ic i, .ic u {
    font-size: 14px;
}
.ic.serif i {
    font-size: 16px;
}
.serif {
    font-family: "Liberation Serif", serif;
}
.glyph {
    font-size: 18px;
}
.drop {
    width: 12px;
    height: 23px;
}
.sep {
    width: 1px;
    height: 21px;
    margin: 0 4px;
    background-color: #d2d0ce;
}
.tall {
    height: 58px;
    margin: 6px 8px 0 4px;
}
.combo {
    appearance: none;
    height: 23px;
    padding: 0 3px;
    border: 1px solid #c8c6c4;
    color: #333;
    background: #fff url("data:image/svg+xml,%3Csvg xmlns='http://www.w3.org/2000/svg' width='5' height='3'%3E%3Cpath d='M0 0h5L2.5 3z' fill='%23666'/%3E%3C/svg%3E") no-repeat right 4px center;
}
.face {
    width: 112px;
}
.size {
    width: 44px;
    margin-left: -1px;
}
.format {
    width: 131px;
}
.number .tools {
    padding-right: 0;
}
.gallery {
    display: flex;
    width: 229px;
    height: 62px;
    margin-top: 2px;
    border: 1px solid #c8c6c4;
    background-color: #fff;
}
.swatches {
    flex: 1;
    display: grid;
    grid-template-columns: 1fr 1fr;
    gap: 6px;
    padding: 5px 3px;
}
.swatches button {
    height: 22px;
    padding-left: 4px;
    justify-content: flex-start;
    font-size: 13px;
}
.normal {
    color: #000;
    outline: 3px solid #c3c3c3;
}
.bad {
    background-color: #ffc7ce;
    color: #9c0006;
}
.good {
    background-color: #c6efce;
    color: #006100;
}
.neutral {
    background-color: #ffeb9c;
    color: #9c5700;
}
.gallery-nav {
    display: flex;
    flex-direction: column;
    width: 14px;
    border-left: 1px solid #c8c6c4;
}
.gallery-nav button {
    flex: 1;
}
.gallery-nav button + button {
    border-top: 1px solid #c8c6c4;
}
.gallery-nav .off {
    background-color: #e6e6e6;
}
.styles .tools {
    padding-left: 9px;
    gap: 2px;
}
.cells .tools {
    padding-left: 10px;
    gap: 6px;
}
.cells .big {
    width: 36px;
}
.editing .tools {
    padding-left: 11px;
    gap: 5px;
}
.editing .stack button {
    height: 23px;
}
.collapse {
    margin: auto 10px 0 auto;
    height: 8px;
}

/* formula bar */
.formula-bar {
    display: flex;
    align-items: flex-start;
    padding: 11px 5px 10px;
}
.name-box {
    display: flex;
    align-items: center;
    width: 102px;
    height: 26px;
    padding: 0 6px;
    border: 1px solid #c6c6c6;
    background-color: #fdfdfd;
}
.name-box input {
    flex: 1;
    min-width: 0;
}
.dots {
    width: 2px;
    height: 10px;
    margin: 8px 14px;
    background: repeating-linear-gradient(#aaa 0 2px, transparent 2px 4px);
}
.entry {
    display: flex;
    width: 110px;
    height: 26px;
    border: 1px solid #c6c6c6;
    background-color: #fdfdfd;
}
.entry button {
    flex: 1;
}
.fx {
    font-family: "Liberation Serif", serif;
    font-style: italic;
    font-weight: bold;
    font-size: 15px;
    line-height: 15px;
    color: #666;
}
.fx sub {
    font-size: 11px;
}
.formula {
    flex: 1;
    display: flex;
    height: 46px;
    margin-left: 3px;
    padding: 9px 4px;
    border: 1px solid #c6c6c6;
    background-color: #fdfdfd;
}
.formula textarea {
    flex: 1;
    resize: none;
}

/* grid */
.sheet {
    display: flex;
}
.grid {
    flex: 1;
    overflow: hidden;
    border-right: 1px solid #999;
    border-bottom: 1px solid #999;
}
table {
    table-layout: fixed;
    width: 1590px;
    border-collapse: separate;
    border-spacing: 0;
    color: #000;
    font-size: 13px;
    line-height: 18px;
}
.c-head { width: 26px; }
.c-a { width: 103px; }
.c-b { width: 149px; }
.c-c { width: 140px; }
.c-d { width: 160px; }
.c-e { width: 171px; }
.c-f { width: 169px; }
.c-g { width: 179px; }
.c-j { width: 135px; }
td, th {
    height: 20px;
    padding: 0 2px;
    white-space: nowrap;
}
td {
    background-color: #fff;
    border-right: 1px solid #d4d4d4;
    border-bottom: 1px solid #d4d4d4;
}
th {
    padding: 0;
    font-weight: 400;
    font-size: 12px;
    background-color: #e6e6e6;
    border-bottom: 1px solid #b5b5b5;
    border-right: 1px solid #999;
}
thead th {
    border-right-color: #b5b5b5;
    border-bottom-color: #999;
}
.corner {
    background: linear-gradient(135deg, transparent 50%, #b2b2b2 50%) no-repeat 10px 4px / 12px 12px #e6e6e6;
}
.current th {
    background-color: #d2d2d2;
    border-right: 2px solid #217346;
    color: #217346;
}
td a {
    color: #0563c1;
}
.flag {
    background: linear-gradient(135deg, #107c10 50%, transparent 50%) no-repeat 0 0 / 6px 6px #fff;
}
.vscroll {
    display: flex;
    flex-direction: column;
    width: 15px;
    margin: 2px 3px 0;
}
.vscroll button, .hscroll button {
    flex: none;
    width: 15px;
    height: 15px;
    border: 1px solid #ababab;
    background-color: #fff;
}
.track {
    flex: 1;
    background-color: #dadada;
}
.thumb {
    border: 1px solid #ababab;
    background-color: #fff;
}
.vscroll .thumb {
    height: 95%;
}

/* sheet tabs */
.sheet-tabs {
    display: flex;
    align-items: flex-start;
    height: 28px;
    padding-right: 19px;
    border-bottom: 1px solid #c6c6c6;
}
.tab-nav {
    display: flex;
    gap: 24px;
    width: 100px;
    height: 26px;
    padding-left: 27px;
}
.sheet-tab {
    height: 25px;
    margin-top: -1px;
    padding: 2px 12px 0;
    background-color: #fff;
    border-left: 1px solid #999;
    border-right: 1px solid #999;
    border-bottom: 2px solid #217346;
    color: #217346;
    font-weight: 700;
}
.add-sheet {
    height: 26px;
    margin: 0 auto 0 33px;
}
.hscroll {
    display: flex;
    width: 38%;
    height: 15px;
    margin-top: 6px;
}
.hscroll .track {
    margin-right: 2px;
}
.hscroll .thumb {
    width: 67%;
    height: 15px;
}

/* status bar */
.statusbar {
    display: flex;
    align-items: center;
    justify-content: flex-end;
    height: 21px;
    background-color: #f3f2f1;
}
.view {
    width: 38px;
    height: 21px;
    padding-bottom: 2px;
}
.zoom {
    display: flex;
    align-items: center;
    gap: 4px;
    padding: 0 19px 2px 6px;
}
.zoom input {
    appearance: none;
    width: 100px;
    height: 12px;
    background: linear-gradient(#aaa, #aaa) no-repeat 0 6px / 100% 1px;
}
.zoom input::-webkit-slider-thumb {
    appearance: none;
    width: 5px;
    height: 12px;
    background-color: #666;
}
.percent {
    margin-left: 6px;
    font-size: 11px;
}
```
